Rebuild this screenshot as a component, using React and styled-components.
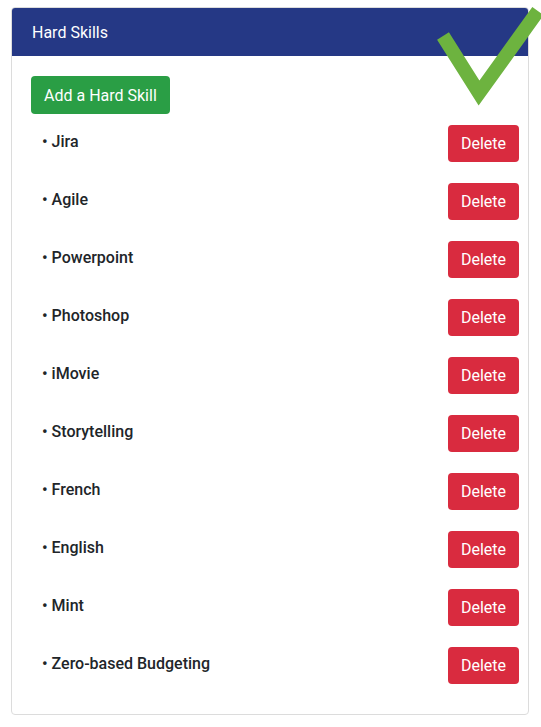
import React from "react";
import styled, { createGlobalStyle } from "styled-components";

const skills = [
  "Jira",
  "Agile",
  "Powerpoint",
  "Photoshop",
  "iMovie",
  "Storytelling",
  "French",
  "English",
  "Mint",
  "Zero-based Budgeting",
];

const GlobalStyle = createGlobalStyle`
  body {
    margin: 0;
    background: #fff;
    font-family: Roboto, "Liberation Sans", sans-serif;
    color: #212529;
  }
`;

const Page = styled.div`
  position: relative;
  padding: 7px 12px 0 11px;
  width: 541px;
  box-sizing: border-box;
`;

const Card = styled.section`
  border: 1px solid #dcdcdc;
  border-radius: 4px;
  overflow: hidden;
`;

const Header = styled.div`
  background: #253885;
  color: #fff;
  font-size: 16px;
  height: 48px;
  display: flex;
  align-items: center;
  padding: 0 20px;
`;

const Body = styled.div`
  padding: 20px 9px 20px 19px;
`;

const Button = styled.button`
  border: none;
  border-radius: 4px;
  color: #fff;
  font-family: Roboto, "Liberation Sans", sans-serif;
  font-size: 16px;
  cursor: pointer;
  background: ${(p) => (p.$variant === "danger" ? "#d92b3f" : "#2a9e45")};
  height: ${(p) => (p.$variant === "danger" ? "37px" : "38px")};
  padding: 0 13px;
`;

const Row = styled.div`
  display: flex;
  align-items: center;
  justify-content: space-between;
  padding: 10px 0 10px 11px;
  height: 38px;
`;

const Name = styled.span`
  font-weight: 500;
  font-size: 16px;
  color: #212529;
  margin-bottom: 4px;
`;

const Check = styled.svg`
  position: absolute;
  top: 0;
  left: 420px;
  pointer-events: none;
`;

export default function App() {
  return (
    <Page>
      <GlobalStyle />
      <Card>
        <Header>Hard Skills</Header>
        <Body>
          <Button>Add a Hard Skill</Button>
          {skills.map((s) => (
            <Row key={s}>
              <Name>• {s}</Name>
              <Button $variant="danger">Delete</Button>
            </Row>
          ))}
        </Body>
      </Card>
      <Check width="121" height="110" viewBox="0 0 121 110">
        <polyline
          points="23,36 59,93 118,11"
          fill="none"
          stroke="#6db33f"
          strokeWidth="14"
        />
      </Check>
    </Page>
  );
}
